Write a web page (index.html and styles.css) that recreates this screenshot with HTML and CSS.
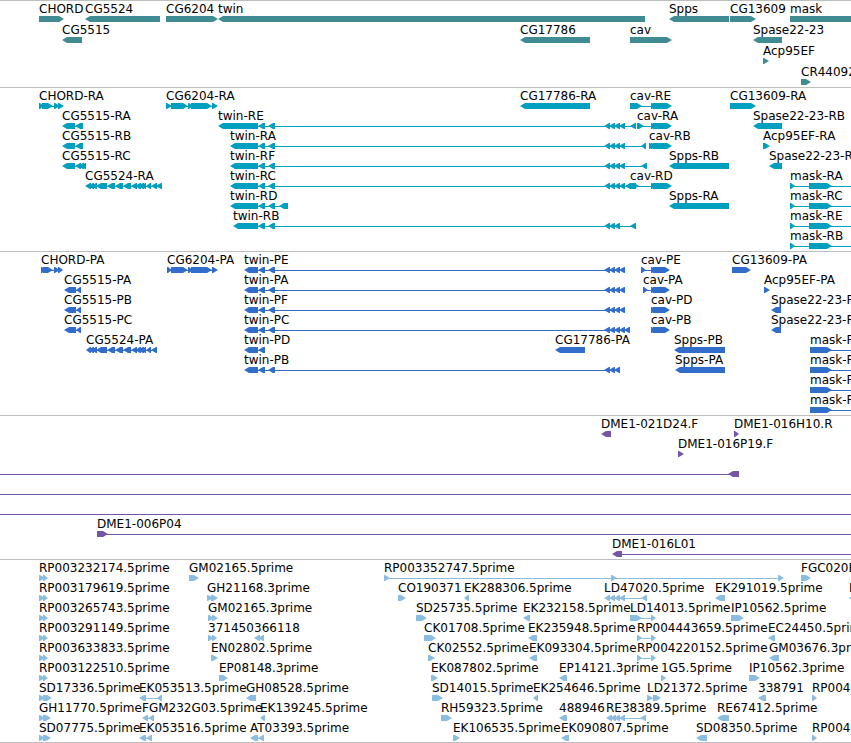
FILE: index.html
```html
<!DOCTYPE html>
<html lang="en">
<head>
  <meta charset="UTF-8" />
  <meta name="viewport" content="width=device-width, initial-scale=1" />
  <title>Genome Browser</title>
  <link rel="stylesheet" href="styles.css">
</head>
<body>
  <main class="browser">
    <section class="track genes" id="genes" aria-label="Genes"></section>
    <section class="track transcripts" id="transcripts" aria-label="Transcripts"></section>
    <section class="track proteins" id="proteins" aria-label="Proteins"></section>
    <section class="track clones" id="clones" aria-label="Genomic clones"></section>
    <section class="track ests" id="ests" aria-label="ESTs"></section>
  </main>
  <script src="tracks.js"></script>
</body>
</html>
```

FILE: styles.css
```css
body {
  margin: 0;
  background: #fff;
  color: #000;
  font-family: "DejaVu Sans", sans-serif;
  font-size: 12px;
}

.browser {
  border-bottom: 1px solid #bebebe;
  overflow: hidden;
}

.track {
  border-top: 1px solid #bebebe;
  padding-bottom: 3px;
}

.row {
  position: relative;
  height: 20px;
}

.genes .row {
  height: 21px;
}

.genes,
.ests {
  padding-bottom: 2px;
}

/* a feature sits at its own coordinate on the sequence */
.feature {
  position: absolute;
  top: 0;
}

.label {
  display: block;
  height: 15px;
  line-height: 16px;
  white-space: nowrap;
}

.glyph {
  display: block;
  height: 6px;
  overflow: visible;
  fill: currentColor;
}

.genes .glyph {
  color: #408c92;
}

.transcripts .glyph {
  color: #009fbf;
}

.proteins .glyph {
  color: #326dcc;
}

.clones .glyph {
  color: #7556a6;
}

.ests .glyph {
  color: #8abddf;
}
```

FILE: tracks.js
```javascript
// Each row is a list of "name strand blocks", a name of _ has no label.
// Blocks are start-end pairs, a thin line joins the first to the last.
const TWIN = '258-265,268-275,604-610,609-615,614-620';
const CAV = '651-656,653-672';
const CAVP = '651-656,653-670';

const tracks = {
  genes: [
    ['CHORD > 39-64', 'CG5524 < 85-160', 'CG6204 > 166-218', 'twin < 218-645', 'Spps < 669-729', 'CG13609 > 730-756', 'mask > 790-2400'],
    ['CG5515 < 62-82', 'CG17786 < 520-590', 'cav > 630-672', 'Spase22-23 < 753-782'],
    ['Acp95EF > 763-769'],
    ['CR44092 > 801-811']
  ],
  transcripts: [
    ['CHORD-RA > 39-44,42-53,54-60,58-64', 'CG6204-RA > 166-172,171-188,188-193,191-212,212-218', 'CG17786-RA < 520-590', 'cav-RE > 630-642,' + CAV, 'CG13609-RA > 730-756'],
    ['CG5515-RA < 62-75,75-83', 'twin-RE < 218-258,' + TWIN + ',619-625,630-636', 'cav-RA > 637-644,' + CAV, 'Spase22-23-RB < 753-782'],
    ['CG5515-RB < 62-75,75-83', 'twin-RA < 230-258,' + TWIN + ',619-625,641-646', 'cav-RB > 649-654,' + CAV, 'Acp95EF-RA > 763-770'],
    ['CG5515-RC < 62-75,75-81,78-84,81-86', 'twin-RF < 230-258,' + TWIN + ',619-625,641-647', 'Spps-RB < 669-729', 'Spase22-23-RD < 769-782'],
    ['CG5524-RA < 85-91,88-94,91-97,96-107,107-115,115-123,123-131,131-137,135-141,138-144,142-146,146-151,151-157,156-162', 'twin-RC < 230-258,' + TWIN + ',619-625,625-636', 'cav-RD > 630-639,' + CAV, 'mask-RA > 790-795,809-832,2390-2400'],
    ['twin-RD < 230-258,258-265,268-275,279-288', 'Spps-RA < 669-729', 'mask-RC > 790-795,809-832,2390-2400'],
    ['twin-RB < 233-258,' + TWIN + ',630-636', 'mask-RE > 790-795,809-832,2390-2400'],
    ['mask-RB > 790-795,809-832,2390-2400']
  ],
  proteins: [
    ['CHORD-PA > 41-46,43-53,54-60,58-63', 'CG6204-PA > 167-172,171-188,188-193,191-212,212-218', 'twin-PE < 244-258,' + TWIN + ',619-625', 'cav-PE > 641-646,' + CAVP, 'CG13609-PA > 732-751'],
    ['CG5515-PA < 64-76,76-81', 'twin-PA < 244-258,' + TWIN + ',619-625', 'cav-PA > 643-648,' + CAVP, 'Acp95EF-PA > 764-770'],
    ['CG5515-PB < 64-76,76-81', 'twin-PF < 244-258,' + TWIN + ',619-625', 'cav-PD > ' + CAVP, 'Spase22-23-PB < 771-781'],
    ['CG5515-PC < 64-76,76-81', 'twin-PC < 244-258,' + TWIN + ',619-625,624-630', 'cav-PB > ' + CAVP, 'Spase22-23-PD < 771-781'],
    ['CG5524-PA < 86-91,88-94,91-97,96-107,107-115,115-123,123-131,131-137,135-141,138-144,142-146,146-151,151-157', 'twin-PD < 244-258,258-265', 'CG17786-PA < 555-585', 'Spps-PB < 674-725', 'mask-PA > 810-832,2390-2400'],
    ['twin-PB < 244-258,' + TWIN, 'Spps-PA < 675-725', 'mask-PC > 810-832,2390-2400'],
    ['mask-PE > 810-832,2390-2400'],
    ['mask-PB > 810-832,2390-2400']
  ],
  clones: [
    ['DME1-021D24.F < 601-611', 'DME1-016H10.R > 734-739'],
    ['DME1-016P19.F > 678-684'],
    ['_ < -20--10,728-739'],
    ['_ > -20--10,2390-2400'],
    ['_ > -20--10,2390-2400'],
    ['DME1-006P04 > 97-108,2390-2400'],
    ['DME1-016L01 < 612-622,2390-2400']
  ],
  ests: [
    ['RP003232174.5prime > 39-45,43-48', 'GM02165.5prime > 189-199', 'RP003352747.5prime > 384-390,611-617,778-784', 'FGC020E > 801-811'],
    ['RP003179619.5prime > 39-45,43-48', 'GH21168.3prime > 207-213,211-218', 'CO190371 > 398-406', 'EK288306.5prime < 464-469', 'LD47020.5prime < 604-610,609-615,614-620,619-625,641-647', 'EK291019.5prime < 715-725', 'EK < 849-857'],
    ['RP003265743.5prime > 39-45,43-48', 'GM02165.3prime > 208-214,212-218', 'SD25735.5prime > 416-427', 'EK232158.5prime < 523-530', 'LD14013.5prime > 630-642,651-656', 'IP10562.5prime > 731-744'],
    ['RP003291149.5prime > 39-45,43-48', '371450 > 208-214,212-217', '366118 < 254-260,258-264', 'CK01708.5prime > 424-436', 'EK235948.5prime < 528-537', 'RP004443659.5prime > 637-642,651-656', 'EC24450.5prime < 768-775'],
    ['RP003633833.5prime > 39-45,43-48', 'EN02802.5prime > 211-218', 'CK02552.5prime > 428-435', 'EK093304.5prime < 529-537', 'RP004220152.5prime > 637-642,651-656', 'GM03676.3prime < 769-779'],
    ['RP003122510.5prime > 39-45,43-48', 'EP08148.3prime > 219-228', 'EK087802.5prime > 431-438', 'EP14121.3prime < 559-567', '1G5.5prime > 661-666', 'IP10562.3prime > 749-760'],
    ['SD17336.5prime > 39-45,43-52', 'EK053513.5prime < 139-146,157-162', 'GH08528.5prime < 246-256', 'SD14015.5prime > 432-443', 'EK254646.5prime < 533-538', 'LD21372.5prime > 647-653,653-661', '338791 < 758-766', 'RP004 > 812-817'],
    ['GH11770.5prime > 39-45,43-51', 'FGM232G03.5prime < 142-148,148-154', 'EK139245.5prime < 260-265', 'RH59323.5prime > 441-452', '488946 < 559-567', 'RE38389.5prime < 606-612,610-616,614-620,619-625,640-646', 'RE67412.5prime < 717-729'],
    ['SD07775.5prime > 39-45,43-51', 'EK053516.5prime < 139-146,146-152', 'AT03393.5prime < 250-258,258-264', 'EK106535.5prime > 453-460', 'EK090807.5prime < 561-569', 'SD08350.5prime < 696-707', 'RP004 > 812-817']
  ]
};

// a bar with a five pixel arrow head on the strand side
function blockPath(start, end, strand) {
  const dir = strand === '>' ? 1 : -1;
  const tail = dir === 1 ? start : end;
  const head = dir === 1 ? end : start;
  const neck = head - dir * Math.min(5, end - start - 1);
  return `M${tail} 0H${neck}L${head} 3L${neck} 6H${tail}Z`;
}

function drawFeature(text) {
  const [name, strand, list] = text.split(' ');
  const blocks = list.split(',').map(b => b.match(/^(-?\d+)-(-?\d+)$/).slice(1).map(Number));
  const origin = blocks[0][0];
  const width = blocks[blocks.length - 1][1] - origin;
  const path = blocks.map(([s, e]) => `<path d="${blockPath(s - origin, e - origin, strand)}"/>`).join('');
  const line = blocks.length > 1 ? `<rect x="3" y="3" width="${width - 6}" height="1"/>` : '';
  const label = name === '_' ? '' : name;
  return `<div class="feature" style="left:${origin}px">
    <span class="label">${label}</span>
    <svg class="glyph" width="${width}" height="6" aria-hidden="true">${line}${path}</svg>
  </div>`;
}

for (const id in tracks) {
  document.getElementById(id).innerHTML = tracks[id]
    .map(row => `<div class="row">${row.map(drawFeature).join('')}</div>`)
    .join('');
}
```
